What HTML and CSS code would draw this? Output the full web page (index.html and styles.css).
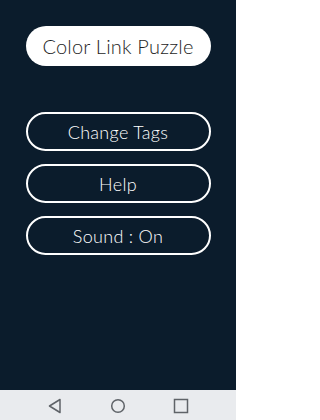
FILE: index.html
```html
<!DOCTYPE html>
<html>
<head>
<meta charset="utf-8">
<link rel="stylesheet" href="styles.css">
</head>
<body>
<div class="screen">
  <main class="menu">
    <div class="title">Color Link Puzzle</div>
    <div class="buttons">
      <div class="btn">Change Tags</div>
      <div class="btn">Help</div>
      <div class="btn">Sound : On</div>
    </div>
  </main>
  <nav class="navbar">
    <svg class="nav-icon" width="16" height="16" viewBox="0 0 16 16"><path d="M13 1.5 L2.5 8 L13 14.5 Z" fill="none" stroke="#5f6368" stroke-width="1.5" stroke-linejoin="round"/></svg>
    <svg class="nav-icon" width="16" height="16" viewBox="0 0 16 16"><circle cx="8" cy="8" r="6.3" fill="none" stroke="#5f6368" stroke-width="1.5"/></svg>
    <svg class="nav-icon" width="16" height="16" viewBox="0 0 16 16"><rect x="1.5" y="1.5" width="13" height="13" fill="none" stroke="#5f6368" stroke-width="1.5"/></svg>
  </nav>
</div>
</body>
</html>
```
FILE: styles.css
```css
html, body {
  margin: 0;
  padding: 0;
}
body {
  width: 236px;
  height: 420px;
  overflow: hidden;
  font-family: Lato, "Liberation Sans", sans-serif;
}
.screen {
  display: flex;
  flex-direction: column;
  height: 420px;
}
.menu {
  flex: 1;
  background: #0b1c2c;
  display: flex;
  flex-direction: column;
  align-items: center;
  padding-top: 26px;
}
.title {
  width: 185px;
  height: 40px;
  box-sizing: border-box;
  background: #ffffff;
  border-radius: 20px;
  display: flex;
  align-items: center;
  justify-content: center;
  color: #1e1e1e;
  font-size: 20px;
  font-weight: 300;
  letter-spacing: 0.2px;
}
.buttons {
  margin-top: 46px;
  display: flex;
  flex-direction: column;
  gap: 13px;
}
.btn {
  width: 185px;
  height: 39px;
  box-sizing: border-box;
  border: 2.5px solid #ffffff;
  border-radius: 20px;
  display: flex;
  align-items: center;
  justify-content: center;
  color: #ffffff;
  font-size: 18px;
  font-weight: 300;
  letter-spacing: 0.3px;
}
.navbar {
  height: 30px;
  background: #e9ebee;
  display: flex;
  align-items: center;
  justify-content: center;
  gap: 47px;
  padding-top: 1px;
  box-sizing: border-box;
}
.nav-icon {
  display: block;
}
```
